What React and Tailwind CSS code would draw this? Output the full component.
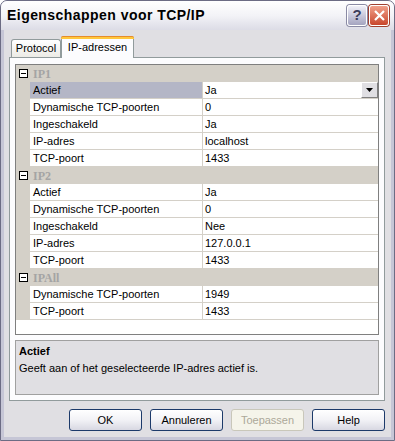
import React from "react";

// Eigenschappen voor TCP/IP - XP style property dialog
const font = { fontFamily: '"Liberation Sans", Arial, sans-serif' };

const groups = [
  {
    name: "IP1",
    rows: [
      ["Actief", "Ja"],
      ["Dynamische TCP-poorten", "0"],
      ["Ingeschakeld", "Ja"],
      ["IP-adres", "localhost"],
      ["TCP-poort", "1433"],
    ],
  },
  {
    name: "IP2",
    rows: [
      ["Actief", "Ja"],
      ["Dynamische TCP-poorten", "0"],
      ["Ingeschakeld", "Nee"],
      ["IP-adres", "127.0.0.1"],
      ["TCP-poort", "1433"],
    ],
  },
  {
    name: "IPAll",
    rows: [
      ["Dynamische TCP-poorten", "1949"],
      ["TCP-poort", "1433"],
    ],
  },
];

const MinusBox = () => (
  <div className="w-[9px] h-[9px] border border-black bg-white flex items-center justify-center">
    <div className="w-[5px] h-px bg-black" />
  </div>
);

const GroupRow = ({ name }) => (
  <div className="flex h-[17px] bg-[#d4d0c8] items-center">
    <div className="w-[14px] flex justify-center pl-[1px]">
      <MinusBox />
    </div>
    <span className="pl-[3px] text-[12px] font-bold text-[#a4a4a4]" style={{ fontFamily: '"Liberation Serif", serif' }}>
      {name}
    </span>
  </div>
);

const PropRow = ({ label, value, selected }) => (
  <div className="flex h-[17px]">
    <div className="w-[14px] bg-[#d4d0c8]" />
    <div
      className={
        "w-[173px] border-b border-r border-[#d4d0c8] pl-[3px] flex items-center " +
        (selected ? "bg-[#b4b6c6]" : "bg-white")
      }
    >
      {label}
    </div>
    <div className="flex-1 border-b border-[#d4d0c8] pl-[2px] flex items-center justify-between">
      <span>{value}</span>
      {selected && (
        <div className="w-[17px] h-[16px] bg-[#e0dfe3] border border-t-white border-l-white border-r-[#808080] border-b-[#808080] flex items-center justify-center">
          <svg width="7" height="4" viewBox="0 0 7 4">
            <path d="M0 0h7L3.5 4z" fill="#000" />
          </svg>
        </div>
      )}
    </div>
  </div>
);

const Button = ({ children, disabled }) => (
  <div
    className={
      "w-[73px] h-[22px] rounded-[3px] border flex items-center justify-center text-[11px] " +
      (disabled
        ? "border-[#c9c7ba] bg-[#f5f4ea] text-[#aca899]"
        : "border-[#1c3a6a] bg-gradient-to-b from-white via-[#f2f2f6] to-[#d8d8e2] text-black")
    }
  >
    {children}
  </div>
);

export default function App() {
  return (
    <div className="w-[395px] h-[441px] bg-white" style={font}>
      <div className="w-[395px] h-[441px] flex flex-col rounded-t-[7px] border border-[#6c6c84] bg-[#c6c6d6] overflow-hidden">
        {/* title bar */}
        <div className="h-[29px] shrink-0 flex items-center justify-between pl-[6px] pr-[5px] bg-gradient-to-b from-white via-[#f3f3f7] to-[#dcdce6]">
          <span className="text-[14px] font-bold text-black tracking-[0.45px]">Eigenschappen voor TCP/IP</span>
          <div className="flex gap-[2px]">
            <div className="w-[20px] h-[21px] rounded-[3px] border border-white bg-gradient-to-b from-[#f0f0f8] to-[#a4a4c0] flex items-center justify-center text-[15px] font-bold text-[#3c3c5a] shadow-[0_0_0_1px_#8a8aa4]">
              ?
            </div>
            <div className="w-[20px] h-[21px] rounded-[3px] border border-white bg-gradient-to-b from-[#f0a08a] to-[#c8442c] flex items-center justify-center shadow-[0_0_0_1px_#a04030]">
              <svg width="11" height="11" viewBox="0 0 11 11">
                <path d="M1 1L10 10M10 1L1 10" stroke="#fff" strokeWidth="2.2" />
              </svg>
            </div>
          </div>
        </div>

        {/* body */}
        <div className="flex-1 mx-[3px] mb-[3px] bg-[#e0dfe3] flex flex-col pt-[6px] pl-[5px] pr-[5px] text-[11px] text-black">
          {/* tabs */}
          <div className="flex items-end h-[21px] pl-[2px]">
            <div className="h-[18px] w-[50px] rounded-t-[3px] border border-b-0 border-[#919b9c] bg-gradient-to-b from-white to-[#ecebe6] flex items-center justify-center">
              Protocol
            </div>
            <div className="relative z-10 -mb-px h-[22px] w-[73px] rounded-t-[3px] border-x border-[#919b9c] bg-[#fcfcfe] flex flex-col">
              <div className="h-[3px] rounded-t-[2px] bg-[#ffc83c] border-t border-[#e68b2c] -mx-px" />
              <div className="flex-1 flex items-center justify-center pb-[2px]">IP-adressen</div>
            </div>
          </div>

          {/* panel */}
          <div className="h-[344px] w-[376px] border border-[#919b9c] bg-[#fcfcfe] pt-[6px] px-[5px] pb-[5px] flex flex-col gap-[5px]">
            <div className="h-[271px] border border-[#7f7f7f] bg-white flex flex-col">
              {groups.map((g, gi) => (
                <div key={g.name}>
                  <GroupRow name={g.name} />
                  {g.rows.map(([l, v], i) => (
                    <PropRow key={l} label={l} value={v} selected={gi === 0 && i === 0} />
                  ))}
                </div>
              ))}
            </div>
            <div className="h-[55px] border border-[#a0a0a0] bg-[#e0dfe3] px-[3px] pt-[3px]">
              <div className="font-bold leading-[14px]">Actief</div>
              <div className="mt-[3px] leading-[14px]">Geeft aan of het geselecteerde IP-adres actief is.</div>
            </div>
          </div>

          {/* buttons */}
          <div className="flex justify-end gap-[8px] mt-[8px] pr-[1px]">
            <Button>OK</Button>
            <Button>Annuleren</Button>
            <Button disabled>Toepassen</Button>
            <Button>Help</Button>
          </div>
        </div>
      </div>
    </div>
  );
}
